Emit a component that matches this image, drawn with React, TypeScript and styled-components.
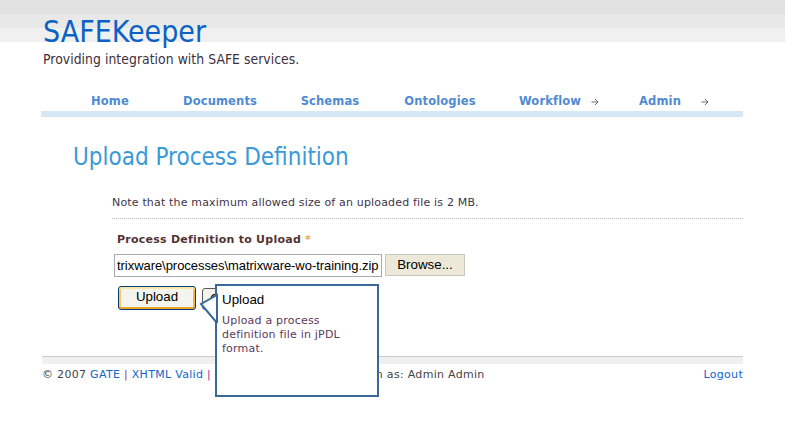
import React from 'react';
import styled, { createGlobalStyle } from 'styled-components';

const GlobalStyle = createGlobalStyle`
  html, body {
    margin: 0;
    padding: 0;
    background: #fff;
  }
  body {
    font-family: "DejaVu Sans", Verdana, sans-serif;
    font-size: 11px;
    letter-spacing: 0.2px;
    color: #3d3548;
  }
`;

const Page = styled.div`
  background: linear-gradient(#e1e1e1 0 14px, #e8e8e8 14px 28px, #f0f0f0 28px 42px, #fff 42px);
  min-height: 425px;
  padding-top: 15px;
  box-sizing: border-box;
`;

const Wrap = styled.div`
  width: 702px;
  margin-left: 41px;
`;

const SiteTitle = styled.h1`
  margin: 0;
  padding-left: 2px;
  font-family: "DejaVu Sans Condensed", "Liberation Sans", sans-serif;
  font-weight: normal;
  font-size: 30px;
  line-height: 34px;
  letter-spacing: 0;
  color: #0b62c4;
`;

const Tagline = styled.p`
  margin: 2px 0 0;
  padding-left: 2px;
  font-family: "DejaVu Sans Condensed", "Liberation Sans", sans-serif;
  font-size: 13.8px;
  line-height: 16px;
  letter-spacing: 0.05px;
  color: #3d2f3d;
`;

const Nav = styled.ul`
  display: flex;
  list-style: none;
  margin: 27px 0 0;
  padding: 0 0 3px 14px;
  border-bottom: 6px solid #d6e8f4;
`;

const NavItem = styled.li`
  position: relative;
  width: 110px;
  text-align: center;
  font-weight: bold;
  font-size: 11.5px;
  line-height: 14px;
  letter-spacing: 0.15px;
  color: #4f8ad3;
`;

const NavArrow = styled.svg`
  position: absolute;
  right: 6px;
  top: 4px;
`;

const Main = styled.div`
  padding-top: 26px;
`;

const Heading = styled.h2`
  margin: 0;
  padding-left: 32px;
  font-family: "DejaVu Sans Condensed", "Liberation Sans", sans-serif;
  font-weight: normal;
  font-size: 24px;
  line-height: 28px;
  letter-spacing: 0;
  color: #3a9ad8;
`;

const Note = styled.p`
  margin: 25px 0 0 71px;
  padding-bottom: 8px;
  line-height: 14px;
  letter-spacing: 0.17px;
  border-bottom: 1px dotted #b8b8b8;
`;

const Form = styled.div`
  margin-top: 14px;
  padding-left: 73px;
`;

const Label = styled.div`
  padding-left: 3px;
  font-weight: bold;
  line-height: 14px;
  letter-spacing: 0.25px;
  color: #553333;
`;

const Star = styled.span`
  color: #f0a830;
`;

const FileRow = styled.div`
  display: flex;
  gap: 3px;
  margin-top: 7px;
  align-items: flex-start;
`;

const FileBox = styled.div`
  width: 268px;
  height: 23px;
  box-sizing: border-box;
  border: 1px solid #a5acb2;
  padding-left: 2px;
  overflow: hidden;
  white-space: nowrap;
  font-family: "Liberation Sans", Arial, sans-serif;
  font-size: 13px;
  letter-spacing: -0.05px;
  line-height: 21px;
  color: #000;
`;

const XpButton = styled.div<{ $w: number; $h: number }>`
  width: ${p => p.$w}px;
  height: ${p => p.$h}px;
  box-sizing: border-box;
  display: flex;
  align-items: center;
  justify-content: center;
  font-family: "Liberation Sans", Arial, sans-serif;
  font-size: 13.33px;
  letter-spacing: 0;
  color: #000;
`;

const BrowseButton = styled(XpButton)`
  background: #ece9d8;
  border: 1px solid #c8c8c0;
  padding-bottom: 2px;
`;

const ButtonRow = styled.div`
  position: relative;
  display: flex;
  align-items: flex-end;
  gap: 6px;
  margin: 9px 0 0 4px;
`;

const SubmitButton = styled(XpButton)`
  border: 1px solid #003c74;
  border-radius: 3px;
  background: #f4f4ef;
  box-shadow: inset 0 2px 0 #fce7a8, inset 0 -2px 0 #f0a22e, inset 2px 0 0 #f9c862, inset -2px 0 0 #f3b440;
  padding-bottom: 3px;
`;

const CancelButton = styled(XpButton)`
  border: 1px solid #5a5a5a;
  border-radius: 3px;
  background: #f4f4ef;
  justify-content: flex-start;
  padding: 0 0 2px 7px;
`;

const Tooltip = styled.div`
  position: absolute;
  left: 97px;
  top: -2px;
  width: 164px;
  height: 113px;
  box-sizing: border-box;
  border: 2px solid #3a6898;
  background: #fff;
  padding: 6px 5px 0;
  z-index: 2;
`;

const TipTail = styled.svg`
  position: absolute;
  left: -18px;
  top: 7px;
`;

const TipTitle = styled.div`
  font-family: "Liberation Sans", Arial, sans-serif;
  font-size: 13.33px;
  line-height: 16px;
  letter-spacing: 0;
  color: #000;
`;

const TipBody = styled.div`
  margin-top: 6px;
  line-height: 14px;
  color: #5b3a5b;
`;

const FooterRule = styled.div`
  margin: 46px 0 0 1px;
  height: 7px;
  border-top: 1px solid #cccccc;
  background: #f0f0f0;
`;

const FooterBar = styled.div`
  display: flex;
  justify-content: space-between;
  margin: 4px 0 0 1px;
  line-height: 14px;
  letter-spacing: 0.3px;
  color: #444;
`;

const FootLink = styled.span`
  color: #1166cc;
`;

const Sep = styled.span`
  color: #993399;
`;

const Arrow = () => (
  <NavArrow width="8" height="8" viewBox="0 0 8 8">
    <path d="M0.5 4H7M4 1l3 3-3 3" fill="none" stroke="#6a6a6a" strokeWidth="1" />
  </NavArrow>
);

const navItems = [
  { label: 'Home' },
  { label: 'Documents' },
  { label: 'Schemas' },
  { label: 'Ontologies' },
  { label: 'Workflow', sub: true },
  { label: 'Admin', sub: true },
];

export default function App() {
  return (
    <>
      <GlobalStyle />
      <Page>
        <Wrap>
          <SiteTitle>SAFEKeeper</SiteTitle>
          <Tagline>Providing integration with SAFE services.</Tagline>
          <Nav>
            {navItems.map(item => (
              <NavItem key={item.label}>
                {item.label}
                {item.sub && <Arrow />}
              </NavItem>
            ))}
          </Nav>

          <Main>
            <Heading>Upload Process Definition</Heading>
            <Note>Note that the maximum allowed size of an uploaded file is 2 MB.</Note>

            <Form>
              <Label>
                Process Definition to Upload <Star>*</Star>
              </Label>
              <FileRow>
                <FileBox>trixware\processes\matrixware-wo-training.zip</FileBox>
                <BrowseButton $w={80} $h={22}>Browse...</BrowseButton>
              </FileRow>
              <ButtonRow>
                <SubmitButton $w={78} $h={24}>Upload</SubmitButton>
                <CancelButton $w={70} $h={22}>Cancel</CancelButton>
                <Tooltip>
                  <TipTail width="20" height="30" viewBox="0 0 20 30">
                    <polygon points="18,2 2,11 18,30" fill="#fff" stroke="#3a6898" strokeWidth="2" strokeLinejoin="miter" />
                  </TipTail>
                  <TipTitle>Upload</TipTitle>
                  <TipBody>
                    Upload a process
                    <br />
                    definition file in jPDL
                    <br />
                    format.
                  </TipBody>
                </Tooltip>
              </ButtonRow>
            </Form>
          </Main>

          <FooterRule />
          <FooterBar>
            <span>
              © 2007 <FootLink>GATE</FootLink> <Sep>|</Sep> <FootLink>XHTML Valid</FootLink> <Sep>|</Sep>{' '}
              <FootLink>CSS Valid</FootLink> <Sep>|</Sep> <FootLink>About</FootLink> <Sep>|</Sep> Logged in as: Admin Admin
            </span>
            <FootLink>Logout</FootLink>
          </FooterBar>
        </Wrap>
      </Page>
    </>
  );
}
